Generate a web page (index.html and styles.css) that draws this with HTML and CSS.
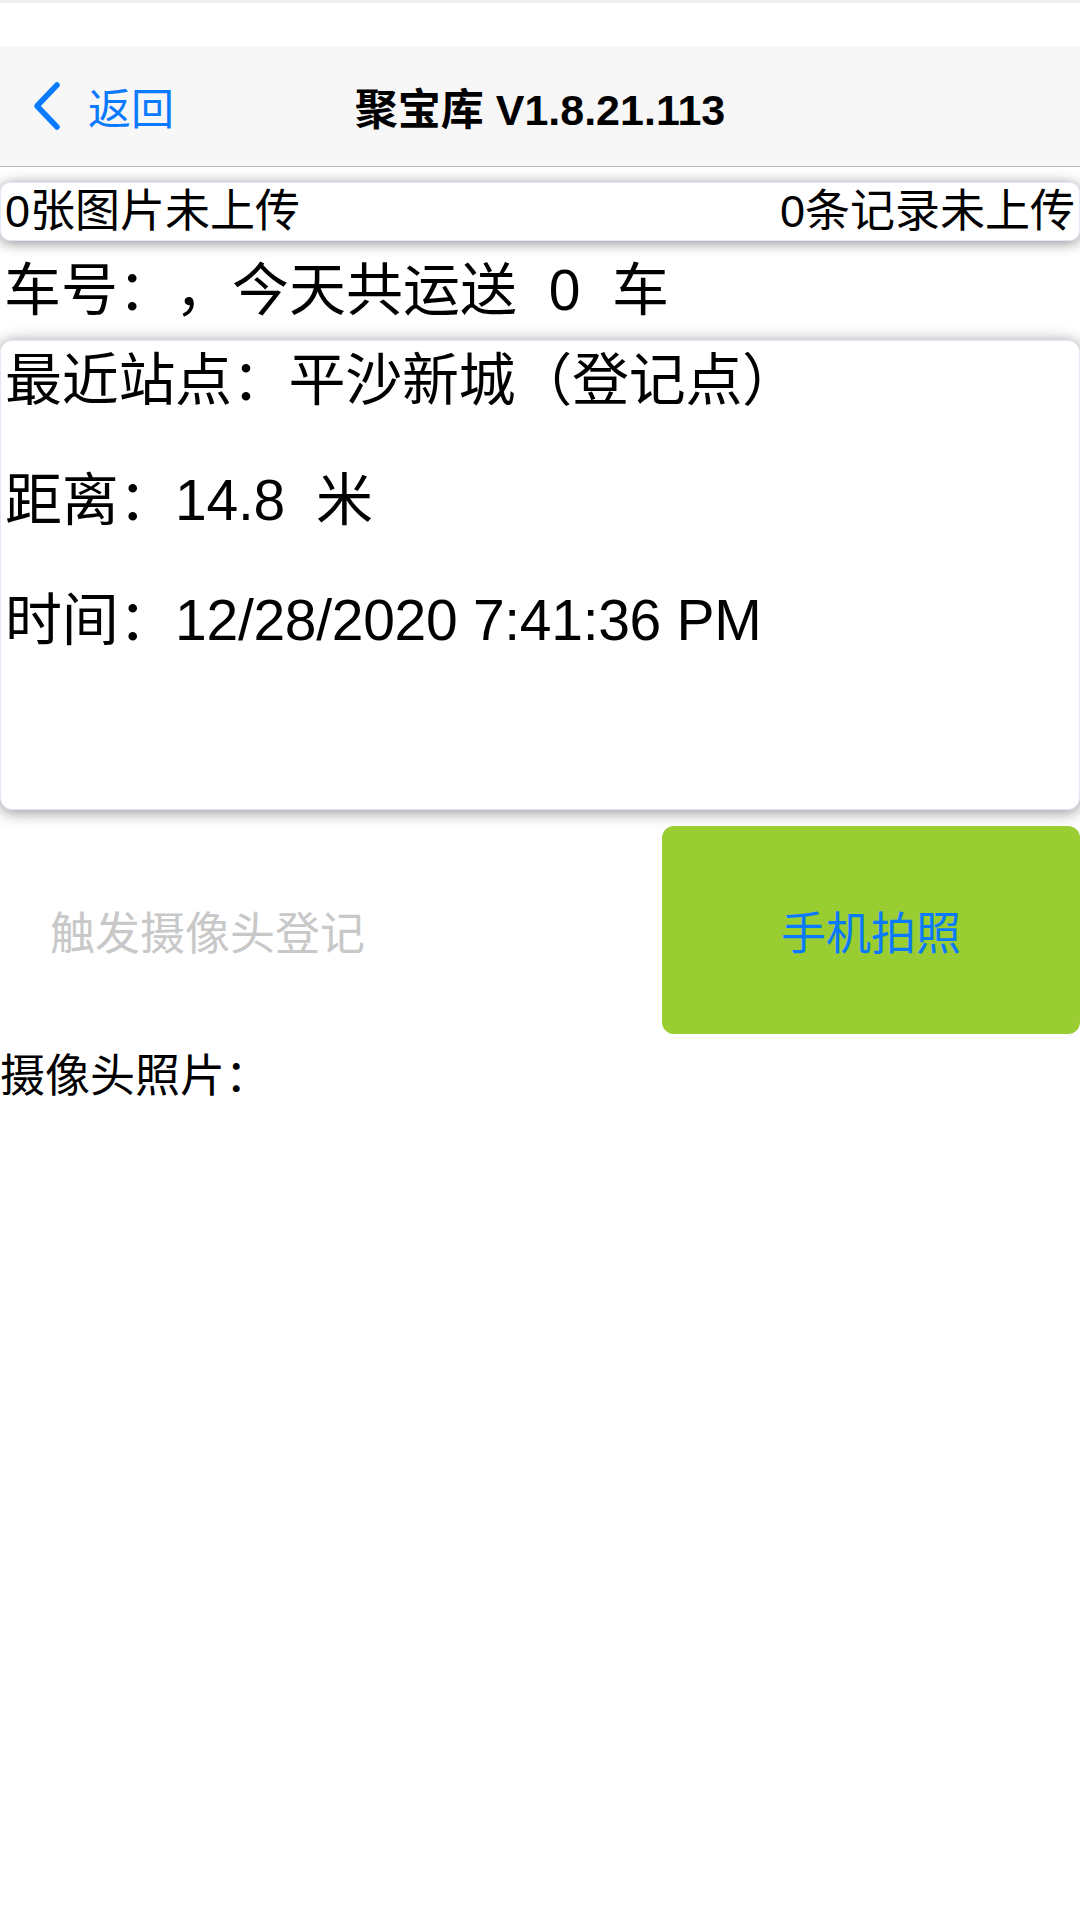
FILE: index.html
```html
<!DOCTYPE html>
<html lang="zh-CN">
<head>
  <meta charset="UTF-8" />
  <meta name="viewport" content="width=device-width, initial-scale=1.0"/>
  <title>聚宝库</title>
  <link rel="stylesheet" href="styles.css">
</head>
<body>
  <div class="status-bar"></div>

  <div class="nav-bar">
    <div class="nav-back">
      <svg class="chevron" width="32" height="50" viewBox="0 0 32 50">
        <path d="M27 4 L7 25 L27 46" fill="none" stroke="#0a7aff" stroke-width="5.5" stroke-linecap="round" stroke-linejoin="round"/>
      </svg>
      <span>返回</span>
    </div>
    <div class="nav-title">聚宝库 V1.8.21.113</div>
    <div></div>
  </div>

  <div class="upload-bar">
    <span>0张图片未上传</span>
    <span>0条记录未上传</span>
  </div>

  <div class="summary">车号：，今天共运送  0  车</div>

  <div class="station-card">
    <p>最近站点：平沙新城（登记点）</p>
    <p>距离：14.8  米</p>
    <p>时间：12/28/2020 7:41:36 PM</p>
  </div>

  <div class="actions">
    <button class="btn-camera">触发摄像头登记</button>
    <button class="btn-photo">手机拍照</button>
  </div>

  <div class="photo-label">摄像头照片：</div>
</body>
</html>
```

FILE: styles.css
```css
body {
  margin: 0;
  padding: 0;
  width: 1080px;
  min-height: 1920px;
  background: #fff;
  color: #000;
  font-family: "Liberation Sans", "Noto Sans CJK SC", sans-serif;
  text-spacing-trim: space-all;
}

.status-bar {
  height: 46px;
  background: #fff;
  border-top: 3px solid #f0f0f0;
  box-sizing: border-box;
}

.nav-bar {
  height: 120px;
  background: #f7f7f7;
  border-bottom: 1px solid #b4b4b4;
  display: grid;
  grid-template-columns: 1fr auto 1fr;
  align-items: center;
}

.nav-back {
  display: flex;
  align-items: center;
  padding-left: 30px;
  color: #0a7aff;
  font-size: 43px;
  gap: 26px;
}

.chevron {
  display: block;
}

.nav-title {
  font-size: 43px;
  font-weight: bold;
}

.upload-bar {
  margin-top: 15px;
  height: 57px;
  line-height: 57px;
  background: #fff;
  border: 1px solid #dfe9f5;
  border-radius: 10px;
  box-shadow: 0 2px 14px rgba(0, 0, 0, 0.45);
  padding: 0 4px;
  font-size: 45px;
  display: flex;
  justify-content: space-between;
  position: relative;
}

.summary {
  height: 99px;
  line-height: 99px;
  padding-left: 4px;
  font-size: 57px;
  white-space: pre;
}

.station-card {
  height: 470px;
  box-sizing: border-box;
  background: #fff;
  border: 1px solid #dfe9f5;
  border-radius: 12px;
  box-shadow: 0 2px 16px rgba(0, 0, 0, 0.45);
  padding: 0 4px;
  display: flex;
  flex-direction: column;
  gap: 42px;
}

.station-card p {
  margin: 0;
  font-size: 57px;
  line-height: 78px;
  white-space: pre;
  letter-spacing: -0.3px;
}

.actions {
  margin-top: 16px;
  height: 208px;
  display: flex;
}

.actions button {
  border: none;
  font-family: inherit;
  font-size: 45px;
  padding: 0;
  cursor: pointer;
}

.btn-camera {
  flex: 1;
  background: transparent;
  color: #c8c8c8;
  text-align: left;
  padding-left: 50px !important;
}

.btn-photo {
  width: 418px;
  background: #9acd32;
  color: #0a7aff;
  border-radius: 12px;
}

.photo-label {
  height: 86px;
  line-height: 86px;
  font-size: 45px;
}
```
